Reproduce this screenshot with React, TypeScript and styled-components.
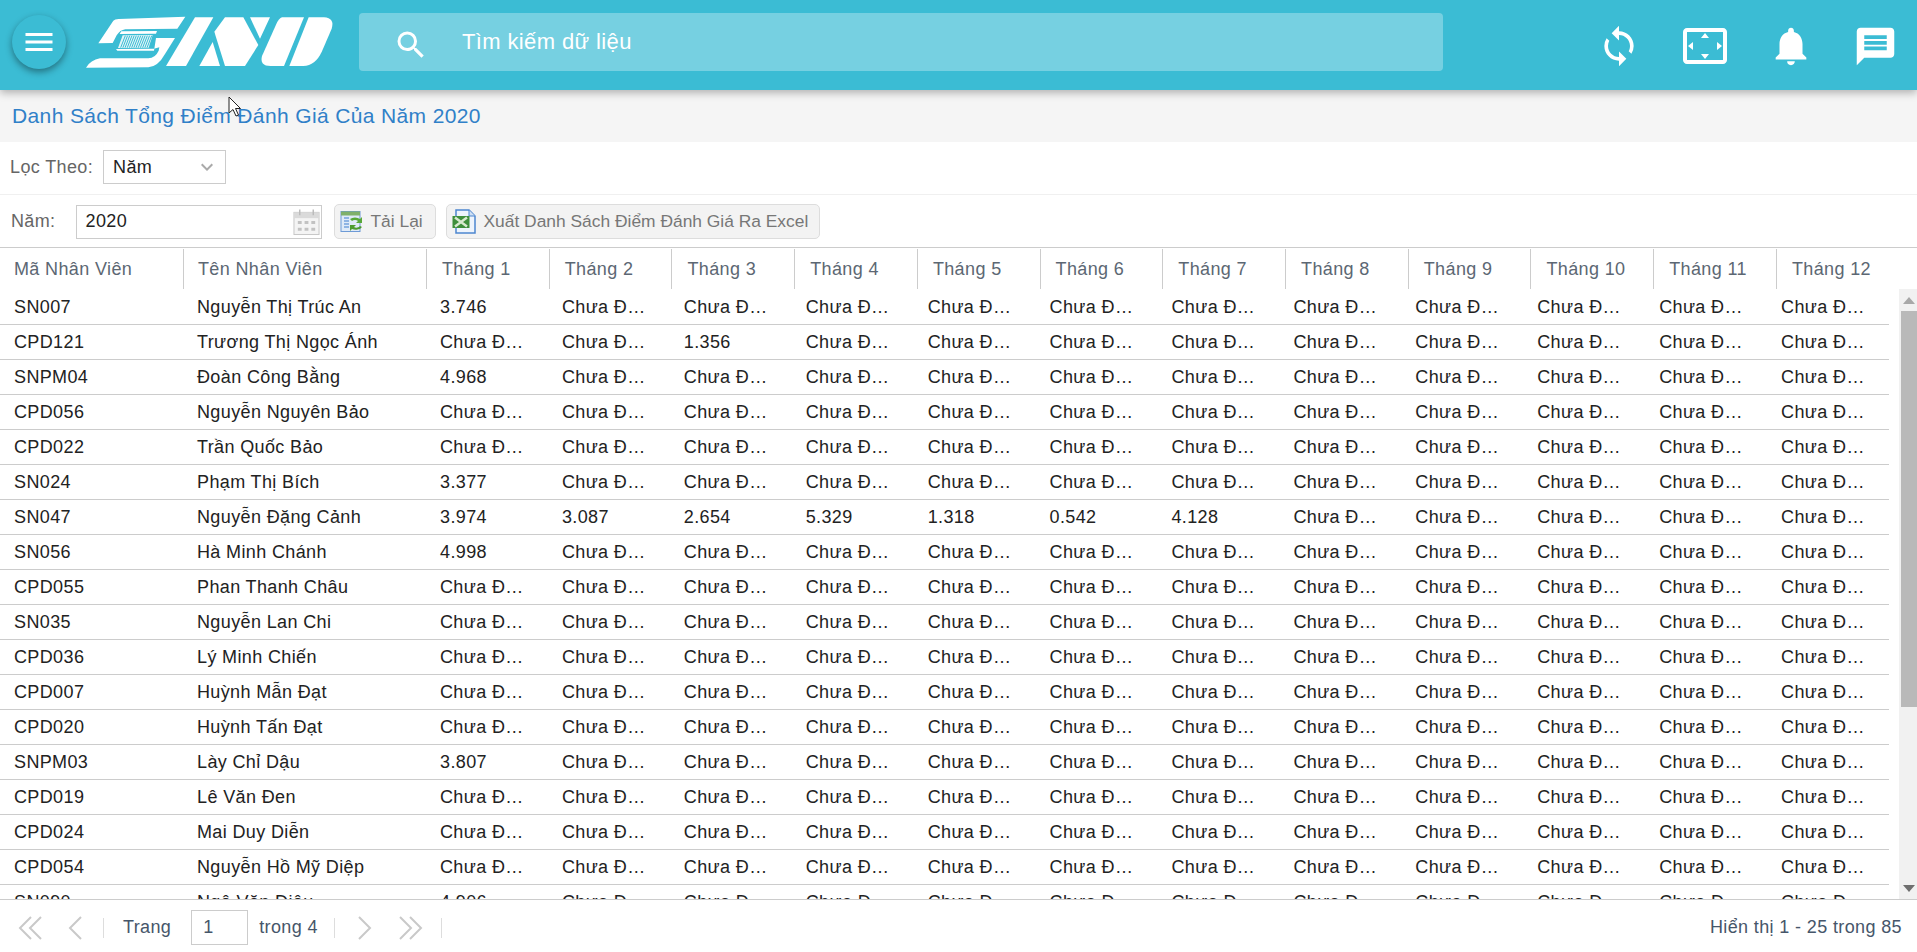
import React from "react";
import styled, { createGlobalStyle } from "styled-components";
import {
  MdMenu,
  MdSearch,
  MdSync,
  MdSettingsOverscan,
  MdNotifications,
  MdMessage,
  MdKeyboardArrowDown,
} from "react-icons/md";

const GlobalStyle = createGlobalStyle`
  html, body { margin: 0; padding: 0; height: 100%; background: #fff; }
  body { font-family: "Liberation Sans", Arial, sans-serif; font-size: 18px; letter-spacing: 0.37px; color: #222; overflow: hidden; }
  * { box-sizing: border-box; }
`;

const Page = styled.div`
  position: relative;
  width: 1917px;
  height: 952px;
  display: flex;
  flex-direction: column;
  overflow: hidden;
`;

const Header = styled.header`
  flex: none;
  height: 90px;
  background: #3bbcd4;
  box-shadow: 0 3px 8px rgba(0, 0, 0, 0.28);
  display: flex;
  align-items: center;
  padding-left: 12px;
  position: relative;
  z-index: 2;
`;

const MenuButton = styled.button`
  flex: none;
  width: 54px;
  height: 54px;
  border: 0;
  padding: 0;
  border-radius: 50%;
  background: #3bbcd4;
  box-shadow: 0 3px 7px rgba(0, 0, 0, 0.4);
  color: #fff;
  display: flex;
  align-items: center;
  justify-content: center;
  margin-top: -6px;
`;

const LogoSvg = styled.svg`
  flex: none;
  width: 260px;
  height: 64px;
  margin: -6px 0 0 14px;
`;

const SearchBox = styled.div`
  flex: none;
  width: 1084px;
  height: 58px;
  margin: -6px 0 0 19px;
  background: rgba(255, 255, 255, 0.3);
  border-radius: 4px;
  display: flex;
  align-items: center;
  color: #fff;
  padding-left: 34px;
`;

const SearchGlyph = styled.span`
  display: flex;
  margin-top: 6px;
`;

const SearchText = styled.span`
  font-size: 22px;
  margin-left: 33px;
  color: #fff;
`;

const HeaderIcons = styled.div`
  flex: 1;
  display: flex;
  align-items: center;
  color: #fff;
  padding: 2px 0 0 146px;
  height: 100%;
`;

const HeaderIcon = styled.span<{ $ml: number }>`
  flex: none;
  width: 60px;
  margin-left: ${(p) => p.$ml}px;
  display: flex;
  align-items: center;
  justify-content: center;
`;

const TitleBar = styled.div`
  flex: none;
  height: 52px;
  background: #f5f5f5;
  display: flex;
  align-items: center;
  padding-left: 12px;
  font-size: 21px;
  color: #3080c8;
`;

const FilterRow = styled.div`
  flex: none;
  height: 53px;
  border-bottom: 1px solid #f0f0f0;
  display: flex;
  align-items: center;
  padding: 0 0 2px 10px;
  color: #666;
`;

const SelectBox = styled.div`
  width: 123px;
  height: 34px;
  margin-left: 10px;
  border: 1px solid #ccc;
  color: #222;
  display: flex;
  align-items: center;
  justify-content: space-between;
  padding: 0 6px 0 9px;
`;

const Toolbar = styled.div`
  flex: none;
  height: 53px;
  border-bottom: 1px solid #ccc;
  display: flex;
  align-items: center;
  padding: 1px 0 0 11px;
  color: #666;
`;

const DateInput = styled.div`
  width: 246px;
  height: 34px;
  margin-left: 20px;
  border: 1px solid #ccc;
  color: #222;
  display: flex;
  align-items: center;
  justify-content: space-between;
  padding: 0 1px 0 9px;
`;

const ToolButton = styled.button<{ $w: number; $ml: number; $gap: number }>`
  flex: none;
  width: ${(p) => p.$w}px;
  height: 35px;
  margin-left: ${(p) => p.$ml}px;
  background: #f3f3f3;
  border: 1px solid #ddd;
  border-radius: 5px;
  font: inherit;
  font-size: 17.4px;
  letter-spacing: 0;
  color: #777;
  display: flex;
  align-items: center;
  gap: ${(p) => p.$gap}px;
  padding: 0 0 0 5px;
  white-space: nowrap;
`;

const HeadRow = styled.div`
  flex: none;
  height: 42px;
  display: grid;
  grid-template-columns: 183px 243px repeat(11, 122.73px) 1fr;
  align-items: stretch;
  padding-top: 1px;
`;

const HeadCell = styled.div<{ $first?: boolean; $pad: number }>`
  height: 40px;
  display: flex;
  align-items: center;
  padding: 1px 0 0 ${(p) => p.$pad}px;
  color: #5c6773;
  border-left: ${(p) => (p.$first ? "0" : "1px solid #ccc")};
  white-space: nowrap;
`;

const TableArea = styled.div`
  flex: 1;
  min-height: 0;
  display: flex;
  border-bottom: 1px solid #ccc;
`;

const Rows = styled.div`
  flex: none;
  width: 1889px;
  overflow: hidden;
  margin-right: 10px;
`;

const Row = styled.div`
  height: 35px;
  display: grid;
  grid-template-columns: 183px 243px repeat(12, 1fr);
  align-items: center;
  border-bottom: 1px solid #ccc;
`;

const Cell = styled.div`
  min-width: 0;
  padding: 1px 22px 0 14px;
  white-space: nowrap;
  overflow: hidden;
  text-overflow: ellipsis;
  color: #222;
`;

const Scrollbar = styled.div`
  flex: none;
  width: 18px;
  margin-top: -1px;
  background: #f1f1f1;
  display: flex;
  flex-direction: column;
  align-items: flex-end;
`;

const ScrollArrow = styled.div`
  flex: none;
  width: 16px;
  height: 22px;
  display: flex;
  align-items: center;
  justify-content: center;
`;

const Thumb = styled.div`
  flex: none;
  width: 16px;
  height: 396px;
  background: #b9b9b9;
`;

const Spacer = styled.div`
  flex: 1;
`;

const Footer = styled.footer`
  flex: none;
  height: 52px;
  display: flex;
  align-items: center;
  color: #46566a;
  padding: 3px 15px 0 0;
`;

const PagerBtn = styled.span<{ $w: number; $ml: number }>`
  flex: none;
  width: ${(p) => p.$w}px;
  margin-left: ${(p) => p.$ml}px;
  display: flex;
  align-items: center;
  justify-content: center;
`;

const PagerSep = styled.span<{ $ml: number }>`
  flex: none;
  width: 1px;
  height: 20px;
  background: #ddd;
  margin-left: ${(p) => p.$ml}px;
`;

const PagerText = styled.span<{ $ml: number }>`
  flex: none;
  margin-left: ${(p) => p.$ml}px;
`;

const PageInput = styled.div`
  flex: none;
  width: 57px;
  height: 35px;
  margin-left: 20px;
  border: 1px solid #ccc;
  padding-left: 11px;
  display: flex;
  align-items: center;
`;

const RightInfo = styled.span`
  margin-left: auto;
`;

const CursorSvg = styled.svg`
  position: absolute;
  left: 228px;
  top: 96px;
  z-index: 3;
`;

const Logo = () => (
  <LogoSvg viewBox="0 0 780 192" aria-label="SKNO logo">
    <g fill="#fff">
      <path d="M100 32 Q104 27 116 27 L316 20 L292 56 L136 58 Q120 60 110 76 L98 99 L55 100 Z" />
      <path d="M124 64 L231 63 L228 71 L119 72 Z" />
      <path d="M285 84 L255 132 Q234 170 205 172 L18 173 Q32 150 60 145 L205 145 Q226 144 236 122 L238 112 L222 116 L108 117 L112 122 L222 122 L228 84 Z" />
      <path d="M128 76 L218 75 L206 113 L114 114 Z" opacity="0.85" />
      <path d="M345 22 L400 22 L318 168 L258 168 Z" />
      <path d="M358 168 L398 96 L420 168 Z" />
      <path d="M403 65 L435 22 L490 22 L535 105 L495 168 L435 168 Z" />
      <path d="M510 22 L570 22 L540 86 Z" />
      <path d="M606 22 L672 22 L612 168 L572 168 Q538 168 546 138 L588 44 Q597 24 606 22 Z" />
      <path d="M686 22 L732 22 Q765 24 755 56 L726 124 Q706 168 670 168 L628 168 Z" />
    </g>
    <g stroke="#3bbcd4" strokeWidth="3">
      {Array.from({ length: 13 }).map((_, i) => (
        <line key={i} x1={136 + i * 6.6} y1={77} x2={122 + i * 6.6} y2={113} />
      ))}
    </g>
  </LogoSvg>
);

const ReloadIcon = () => (
  <svg width="24" height="24" viewBox="0 0 24 24">
    <rect x="1" y="1.5" width="19" height="20" fill="#dfeaf8" stroke="#6d9ad6" />
    <rect x="1" y="1.5" width="19" height="4" fill="#7fb06a" />
    <path d="M4 8h5M4 11h5M4 14h5M4 17h5" stroke="#8fb4e4" strokeWidth="2" />
    <path d="M10 9 a7 5 0 0 1 10 0 l2 -2 v6 h-6 l2 -2 a4 3 0 0 0 -6 0 z" fill="#58a83a" />
    <path d="M22 17 a7 5 0 0 1 -10 2 l-2 2 v-6 h6 l-2 2 a4 3 0 0 0 6 -1 z" fill="#4c9b30" />
  </svg>
);

const ExcelIcon = () => (
  <svg width="24" height="26" viewBox="0 0 24 26">
    <path d="M4 1 H17 L23 7 V24 H4 Z" fill="#eef4fc" stroke="#4d86cf" strokeWidth="1.5" />
    <path d="M17 1 V7 H23" fill="#cfe0f5" stroke="#4d86cf" />
    <rect x="0.5" y="7" width="17" height="12" fill="#3f8f3c" />
    <path d="M3 8.5 L15 17.5 M15 8.5 L3 17.5" stroke="#d9ead0" strokeWidth="2.4" />
  </svg>
);

const CalendarIcon = () => (
  <svg width="27" height="28" viewBox="0 0 28 28" fill="none">
    <rect x="1" y="4" width="26" height="23" fill="#f4f4f4" stroke="#c6c6c6" />
    <rect x="1" y="4" width="26" height="6" fill="#dadada" />
    <path d="M7 1v6M21 1v6" stroke="#bbb" strokeWidth="1.5" />
    <path
      d="M5 13h4v3h-4zM12 13h4v3h-4zM19 13h4v3h-4zM5 20h4v3h-4zM12 20h4v3h-4zM19 20h4v3h-4z"
      fill="#c2c2c2"
    />
  </svg>
);

const Chevrons = ({ dir, double }: { dir: "l" | "r"; double?: boolean }) => {
  const d = dir === "l" ? "M14 2 L3 13 L14 24" : "M2 2 L13 13 L2 24";
  return (
    <svg width={double ? 25 : 16} height="26" viewBox={double ? "0 0 25 26" : "0 0 16 26"} fill="none" stroke="#c9c9c9" strokeWidth="2">
      <path d={d} />
      {double && <path d={d} transform="translate(10 0)" />}
    </svg>
  );
};

const PENDING = "Chưa Đánh Giá";

const DATA: [string, string, (string | null)[]][] = [
  ["SN007", "Nguyễn Thị Trúc An", ["3.746"]],
  ["CPD121", "Trương Thị Ngọc Ánh", [null, null, "1.356"]],
  ["SNPM04", "Đoàn Công Bằng", ["4.968"]],
  ["CPD056", "Nguyễn Nguyên Bảo", []],
  ["CPD022", "Trần Quốc Bảo", []],
  ["SN024", "Phạm Thị Bích", ["3.377"]],
  ["SN047", "Nguyễn Đặng Cảnh", ["3.974", "3.087", "2.654", "5.329", "1.318", "0.542", "4.128"]],
  ["SN056", "Hà Minh Chánh", ["4.998"]],
  ["CPD055", "Phan Thanh Châu", []],
  ["SN035", "Nguyễn Lan Chi", []],
  ["CPD036", "Lý Minh Chiến", []],
  ["CPD007", "Huỳnh Mẫn Đạt", []],
  ["CPD020", "Huỳnh Tấn Đạt", []],
  ["SNPM03", "Lày Chỉ Dậu", ["3.807"]],
  ["CPD019", "Lê Văn Đen", []],
  ["CPD024", "Mai Duy Diễn", []],
  ["CPD054", "Nguyễn Hồ Mỹ Diệp", []],
  ["SN090", "Ngô Văn Diệu", ["4.906"]],
  ["CPD030", "Trần Văn Dũng", []],
];

const MONTHS = Array.from({ length: 12 }, (_, i) => i);

export default function App() {
  return (
    <Page>
      <GlobalStyle />
      <Header>
        <MenuButton aria-label="menu">
          <MdMenu size={36} />
        </MenuButton>
        <Logo />
        <SearchBox>
          <SearchGlyph>
            <MdSearch size={36} />
          </SearchGlyph>
          <SearchText>Tìm kiếm dữ liệu</SearchText>
        </SearchBox>
        <HeaderIcons>
          <HeaderIcon $ml={0}>
            <MdSync size={44} />
          </HeaderIcon>
          <HeaderIcon $ml={26}>
            <MdSettingsOverscan size={48} />
          </HeaderIcon>
          <HeaderIcon $ml={26}>
            <MdNotifications size={46} />
          </HeaderIcon>
          <HeaderIcon $ml={24}>
            <MdMessage size={45} />
          </HeaderIcon>
        </HeaderIcons>
      </Header>
      <TitleBar>Danh Sách Tổng Điểm Đánh Giá Của Năm 2020</TitleBar>
      <FilterRow>
        Lọc Theo:
        <SelectBox>
          Năm
          <MdKeyboardArrowDown size={24} color="#aaa" />
        </SelectBox>
      </FilterRow>
      <Toolbar>
        Năm:
        <DateInput>
          2020
          <CalendarIcon />
        </DateInput>
        <ToolButton $w={102} $ml={12} $gap={7}>
          <ReloadIcon />
          Tải Lại
        </ToolButton>
        <ToolButton $w={374} $ml={10} $gap={8}>
          <ExcelIcon />
          Xuất Danh Sách Điểm Đánh Giá Ra Excel
        </ToolButton>
      </Toolbar>
      <HeadRow>
        <HeadCell $first $pad={14}>Mã Nhân Viên</HeadCell>
        <HeadCell $pad={14}>Tên Nhân Viên</HeadCell>
        {MONTHS.map((m) => (
          <HeadCell key={m} $pad={15}>Tháng {m + 1}</HeadCell>
        ))}
      </HeadRow>
      <TableArea>
        <Rows>
          {DATA.map(([id, name, scores]) => (
            <Row key={id}>
              <Cell>{id}</Cell>
              <Cell>{name}</Cell>
              {MONTHS.map((m) => (
                <Cell key={m}>{scores[m] ?? PENDING}</Cell>
              ))}
            </Row>
          ))}
        </Rows>
        <Scrollbar>
          <ScrollArrow>
            <svg width="12" height="7" viewBox="0 0 12 7"><path d="M6 0 L12 7 H0 Z" fill="#a8a8a8" /></svg>
          </ScrollArrow>
          <Thumb />
          <Spacer />
          <ScrollArrow>
            <svg width="12" height="7" viewBox="0 0 12 7"><path d="M0 0 H12 L6 7 Z" fill="#6f6f6f" /></svg>
          </ScrollArrow>
        </Scrollbar>
      </TableArea>
      <Footer>
        <PagerBtn $w={25} $ml={17}><Chevrons dir="l" double /></PagerBtn>
        <PagerBtn $w={16} $ml={25}><Chevrons dir="l" /></PagerBtn>
        <PagerSep $ml={20} />
        <PagerText $ml={19}>Trang</PagerText>
        <PageInput>1</PageInput>
        <PagerText $ml={11}>trong 4</PagerText>
        <PagerSep $ml={16} />
        <PagerBtn $w={16} $ml={22}><Chevrons dir="r" /></PagerBtn>
        <PagerBtn $w={25} $ml={25}><Chevrons dir="r" double /></PagerBtn>
        <PagerSep $ml={18} />
        <RightInfo>Hiển thị 1 - 25 trong 85</RightInfo>
      </Footer>
      <CursorSvg width="14" height="22" viewBox="0 0 14 22">
        <path d="M1 1 V17 L5 13.5 L8 20 L10.5 19 L7.5 12.5 H12.5 Z" fill="#fff" stroke="#222" strokeWidth="1" />
      </CursorSvg>
    </Page>
  );
}
